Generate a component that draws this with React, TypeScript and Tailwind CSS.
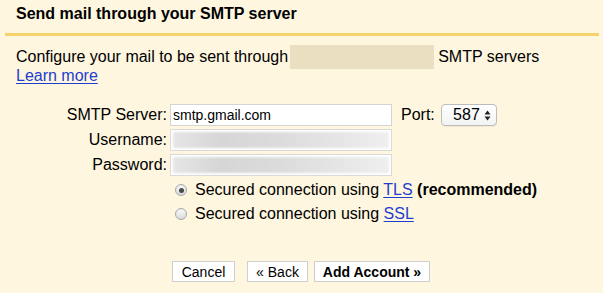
function Radio({ checked }: { checked?: boolean }) {
  return (
    <span className="flex h-[12px] w-[12px] items-center justify-center rounded-full border border-[#a9a9a9] bg-[linear-gradient(180deg,#fdfdfd_0%,#d9d9d9_100%)] shadow-[inset_0_1px_1px_rgba(0,0,0,0.08)]">
      {checked && <span className="h-[5px] w-[5px] rounded-full bg-[#4a4a4a]" />}
    </span>
  );
}

function Btn({ children, className = "" }: { children: React.ReactNode; className?: string }) {
  return (
    <button
      type="button"
      className={`flex h-[21px] items-center justify-center border border-[#cfcfcf] bg-white text-[14px] leading-none text-black ${className}`}
    >
      {children}
    </button>
  );
}

function Blurred() {
  return (
    <div className="mx-[2px] my-[2px] h-[calc(100%-4px)] flex-1 bg-[linear-gradient(90deg,#e6e6e6_0%,#d6d6d6_22%,#dcdcdc_50%,#e6e6e6_78%,#efefef_100%)] blur-[1px]" />
  );
}

export default function App() {
  const font = "font-['Liberation_Sans',Arial,Helvetica,sans-serif]";
  const link = "text-[#1f3ecf] underline underline-offset-[2px]";

  return (
    <div className={`h-[293px] w-[603px] overflow-hidden bg-[#fef6df] text-[16px] text-black ${font}`}>
      <div className="h-[33px] pl-4 pt-[5px] text-[16px] font-bold leading-[18px]">
        Send mail through your SMTP server
      </div>
      <div className="ml-[5px] mr-[4px] h-[3px] bg-[#f6d26c]" />

      <div className="mt-[9px] pl-4">
        <div className="flex h-[24px] items-center">
          <span className="leading-[18px]">Configure your mail to be sent through</span>
          <span className="ml-[2px] h-[24px] w-[144px] bg-[#ebdfc1]" />
          <span className="ml-[4px] leading-[18px]">SMTP servers</span>
        </div>
        <a href="#" className={`-mt-[2px] block w-fit leading-[17px] ${link}`}>
          Learn more
        </a>
      </div>

      <div className="mt-[20px] grid grid-cols-[167px_222px_auto] items-center gap-x-[3px] gap-y-[3px]">
        <span className="text-right leading-[18px]">SMTP Server:</span>
        <div className="flex h-[22px] items-center border border-[#d4d4d4] bg-white pl-[2px] text-[14px]">
          smtp.gmail.com
        </div>
        <div className="flex items-center pl-[6px]">
          <span className="leading-[18px]">Port:</span>
          <div className="ml-[6px] flex h-[22px] w-[56px] items-center justify-end gap-[4px] rounded-[4px] border border-[#bcbcbc] bg-[linear-gradient(180deg,#ffffff_0%,#f3f3f3_100%)] pr-[5px] text-[16px] shadow-[0_1px_0_rgba(0,0,0,0.05)]">
            <span className="leading-none">587</span>
            <svg width="7" height="11" viewBox="0 0 7 11" className="text-[#222]">
              <path d="M3.5 0.5 L6.5 4.5 L0.5 4.5 Z" fill="currentColor" />
              <path d="M3.5 10.5 L6.5 6.5 L0.5 6.5 Z" fill="currentColor" />
            </svg>
          </div>
        </div>

        <span className="text-right leading-[18px]">Username:</span>
        <div className="flex h-[22px] border border-[#d9d9d9] bg-white">
          <Blurred />
        </div>
        <span />

        <span className="text-right leading-[18px]">Password:</span>
        <div className="flex h-[22px] border border-[#d9d9d9] bg-white">
          <Blurred />
        </div>
        <span />
      </div>

      <div className="mt-[2px] pl-[175px]">
        <div className="flex h-[24px] items-center gap-[8px]">
          <Radio checked />
          <span className="leading-[18px]">
            Secured connection using <a href="#" className={link}>TLS</a> <b>(recommended)</b>
          </span>
        </div>
        <div className="flex h-[24px] items-center gap-[8px]">
          <Radio />
          <span className="leading-[18px]">
            Secured connection using <a href="#" className={link}>SSL</a>
          </span>
        </div>
      </div>

      <div className="mt-[35px] flex pl-[172px]">
        <Btn className="w-[63px]">Cancel</Btn>
        <Btn className="ml-[12px] w-[61px]">« Back</Btn>
        <Btn className="ml-[6px] w-[116px] font-bold">Add Account »</Btn>
      </div>
    </div>
  );
}
